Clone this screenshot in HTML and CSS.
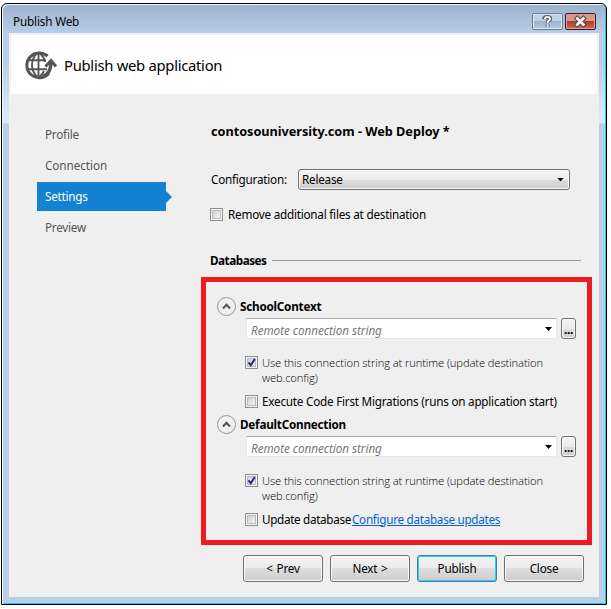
FILE: index.html
```html
<!DOCTYPE html>
<html lang="en">
<head>
<meta charset="utf-8">
<title>Publish Web</title>
<link rel="stylesheet" href="styles.css">
</head>
<body>
<main class="window">
  <header class="titlebar">
    <span class="title">Publish Web</span>
    <div class="caption-buttons">
      <button class="caption help" aria-label="Help"><svg width="29" height="15" viewBox="0 0 29 15"><path d="M11.5 5.2V4Q12 3 14.5 3T17.2 4.8Q17.2 6 15.8 6.8T14.6 9M14.6 10.8v1.6" fill="none" stroke="#4b5561" stroke-width="4"/><path d="M12 5V4Q12.4 3 14.5 3T17.2 4.8Q17.2 6 15.8 6.8T14.6 8.8M14.6 10.8v1.6" fill="none" stroke="#fff" stroke-width="2"/></svg></button>
      <button class="caption close" aria-label="Close window"><svg width="29" height="15" viewBox="0 0 29 15"><path d="M11.3 4.5 17.3 10.5M17.3 4.5 11.3 10.5" stroke="#57484d" stroke-width="4.8" stroke-linecap="square"/><path d="M11.3 4.5 17.3 10.5M17.3 4.5 11.3 10.5" stroke="#f5f5f5" stroke-width="2.7" stroke-linecap="square"/></svg></button>
    </div>
  </header>
  <div class="client">
    <div class="banner">
      <svg class="globe" width="34" height="30" viewBox="0 0 34 30" fill="none" stroke="#555">
        <path d="M23.6 6.2A12.4 12.4 0 1 0 25 23" stroke-width="3"/>
        <path d="M14.5 2.5v25M3 10.2h19M3 19.3h20" stroke-width="1.9"/>
        <path d="M13.5 2.5Q8 8 8 15T13.5 27M15.5 2.5Q20 7 21 12M15.5 27Q18.5 24 20 21" stroke-width="1.9"/>
        <path d="M19 26.5Q27 23.5 27 12" stroke-width="3.5"/>
        <path d="M21.5 16.5 27 10.5 32 16.5" stroke-width="3"/>
      </svg>
      <h1>Publish web application</h1>
    </div>
    <div class="body">
      <nav>
        <a>Profile</a>
        <a class="wide">Connection</a>
        <a class="selected">Settings</a>
        <a>Preview</a>
      </nav>
      <section class="settings">
        <h2>contosouniversity.com - Web Deploy *</h2>
        <div class="config-row">
          <span class="config-label">Configuration:</span>
          <div class="select"><span>Release</span><i class="arrow"></i></div>
        </div>
        <label class="remove-row"><i class="check"></i><span>Remove additional files at destination</span></label>
        <div class="section-title"><b>Databases</b><hr></div>
        <div class="databases">
          <div class="db">
            <div class="db-title"><svg class="expander" width="20" height="20" viewBox="0 0 20 20" fill="none"><circle cx="9.5" cy="9.5" r="9" stroke="#999"/><path d="M6 11.5 9.5 7.8 13 11.5" stroke="#555" stroke-width="2"/></svg><b>SchoolContext</b></div>
            <div class="conn-row"><div class="combo"><em>Remote connection string</em><i class="arrow"></i></div><button class="push dots">...</button></div>
            <label class="runtime"><i class="check on"><svg width="13" height="13" viewBox="0 0 13 13"><path d="M3.5 6.3 5.8 9.2 9.8 3" fill="none" stroke="#292c7b" stroke-width="2"/></svg></i><span>Use this connection string at runtime (update destination<br>web.config)</span></label>
            <label class="option"><i class="check"></i><span>Execute Code First Migrations (runs on application start)</span></label>
          </div>
          <div class="db">
            <div class="db-title"><svg class="expander" width="20" height="20" viewBox="0 0 20 20" fill="none"><circle cx="9.5" cy="9.5" r="9" stroke="#999"/><path d="M6 11.5 9.5 7.8 13 11.5" stroke="#555" stroke-width="2"/></svg><b>DefaultConnection</b></div>
            <div class="conn-row"><div class="combo"><em>Remote connection string</em><i class="arrow"></i></div><button class="push dots">...</button></div>
            <label class="runtime"><i class="check on"><svg width="13" height="13" viewBox="0 0 13 13"><path d="M3.5 6.3 5.8 9.2 9.8 3" fill="none" stroke="#292c7b" stroke-width="2"/></svg></i><span>Use this connection string at runtime (update destination<br>web.config)</span></label>
            <label class="option update"><i class="check"></i><span>Update database</span><a class="link">Configure database updates</a></label>
          </div>
        </div>
        <footer>
          <button class="push">&lt; Prev</button>
          <button class="push">Next &gt;</button>
          <button class="push default">Publish</button>
          <button class="push">Close</button>
        </footer>
      </section>
    </div>
  </div>
</main>
</body>
</html>
```
FILE: styles.css
```css
* { box-sizing: border-box; }
body { margin: 0; padding: 3px 0 0 1px; background: #fff; font: 11.7px/16px "Noto Sans", "Open Sans", sans-serif; letter-spacing: -.22px; color: #000; white-space: nowrap; }
h1, h2 { margin: 0; font-weight: 400; }
button { font: inherit; color: inherit; letter-spacing: inherit; padding: 0; margin: 0; }
svg { display: block; flex: none; }

.window { width: 606px; height: 602px; border: 1px solid #000; border-radius: 6px 6px 0 0; padding: 0 7px; background: linear-gradient(#9bb1cd, #b9cfe8 30px, #b9cfe8 60px, #dce8f5 112px, #dce8f5 119px, #b9cfe6 120px, #b9cfe8); box-shadow: inset 1px 1px #f3f8fc, inset -1px -1px #29c5e5; }
.titlebar { height: 29px; display: flex; justify-content: space-between; padding: 9px 3px 0 4px; }
.title { letter-spacing: -.15px; }
.caption-buttons { display: flex; gap: 2px; }
.caption { width: 31px; height: 17px; border: 1px solid #687b92; border-radius: 2px; box-shadow: inset 0 0 0 1px #dce7f3; background: linear-gradient(#c1d2e6 50%, #9db4cf 50%, #b6cce3); }
.caption.close { border-color: #401820; box-shadow: inset 0 0 0 1px #dda29b; background: linear-gradient(#d6968b 50%, #b53b25 50%, #c96d5a); }
.client { height: 564px; background: #efefef; padding: 2px; }
.banner { height: 59px; background: #fff; display: flex; align-items: center; padding-left: 13px; gap: 6px; }
h1 { font-size: 14.8px; line-height: 20px; letter-spacing: -.28px; }
.body { display: flex; }
nav { width: 129px; margin: 26px 45px 0 26px; display: flex; flex-direction: column; gap: 2px; }
nav a { height: 29px; line-height: 29px; padding-left: 8px; color: #555; position: relative; }
nav .wide { letter-spacing: -.05px; }
nav .selected { background: #1382d2; color: #fff; }
nav .selected::after { content: ""; position: absolute; left: 129px; top: 9px; border: 6px solid transparent; border-left-color: #1382d2; border-right: 0; }
.settings { flex: 1; padding-top: 29px; }
h2 { height: 17px; line-height: 17px; font-size: 12.7px; font-weight: 700; letter-spacing: -.02px; }
.config-row { display: flex; align-items: center; height: 21px; margin-top: 29px; }
.config-label { width: 87px; }
.config-row span, .remove-row span, .section-title b, .db-title b, .option span, .option a { padding-bottom: 2px; }
.select { width: 272px; height: 21px; border: 1px solid #707070; border-radius: 3px; display: flex; align-items: center; justify-content: space-between; padding: 0 5px 0 3px; background: linear-gradient(#f2f2f2, #ebebeb 50%, #ddd 50%, #cfcfcf); box-shadow: inset 0 0 0 1px #fafafa; }
.arrow { width: 7px; height: 4px; background: #000; clip-path: polygon(0 0, 100% 0, 50% 100%); }
label { display: flex; }
.check { width: 13px; height: 13px; flex: none; border: 1px solid #8e8f8f; background: linear-gradient(135deg, #cbcfd5, #f6f6f6) 2px 2px / 7px 7px no-repeat, #f4f4f4; box-shadow: inset 0 0 0 1px #f4f4f4, inset 0 0 0 2px #b8bcc2; }
.check svg { margin: -1px; }
.remove-row { margin: 17px 0 0 -1px; height: 15px; align-items: center; gap: 5px; }
.section-title { display: flex; align-items: center; height: 16px; margin: 31px 0 0 -1px; gap: 6px; }
.section-title b { width: 56px; letter-spacing: -.47px; }
hr { width: 309px; border: 0; height: 1px; background: #999; margin: -1px 0 0; }
.databases { width: 391px; height: 268px; border: 5px solid #ed1c24; margin: 8px 0 0 -10px; padding: 15px 0 0 11px; }
.db { height: 118px; }
.db-title { display: flex; align-items: center; height: 20px; gap: 3px; }
.conn-row { display: flex; height: 21px; margin: 1px 0 0 29px; gap: 4px; }
.combo { width: 311px; background: #fff; border: 1px solid #e3e9ef; border-top-color: #abadb3; display: flex; align-items: center; justify-content: space-between; padding: 3px 4px 0 4px; }
.combo .arrow { margin-top: -2px; }
em { color: #777; letter-spacing: -.05px; }
.push { height: 27px; width: 80px; border: 1px solid #707070; border-radius: 3px; background: linear-gradient(#f3f3f3, #ebebeb 50%, #ddd 50%, #cdcdcd); box-shadow: inset 0 0 0 1px #fbfbfb; }
.push.dots { width: 15px; height: 21px; font-weight: 700; padding-top: 2px; line-height: 15px; }
.runtime { margin: 17px 0 0 28px; gap: 4px; font-family: "Open Sans", sans-serif; font-size: 11.2px; letter-spacing: -.1px; line-height: 15px; font-weight: 300; height: 30px; }
.runtime > span { margin-top: -1px; }
.option { margin: 8px 0 0 28px; height: 15px; align-items: center; gap: 4px; }
.option .check { margin-top: -1px; }
.update { letter-spacing: -.32px; }
.update span { width: 86px; }
.link { color: #0066cc; text-decoration: underline; letter-spacing: -.28px; }
footer { display: flex; gap: 7px; margin: 10px 0 0 32px; }
.push:not(.dots) { padding-bottom: 1px; word-spacing: 1px; }
.default { border-color: #3c7fb1; box-shadow: inset 0 0 0 1px #2bd0f5; }
```
